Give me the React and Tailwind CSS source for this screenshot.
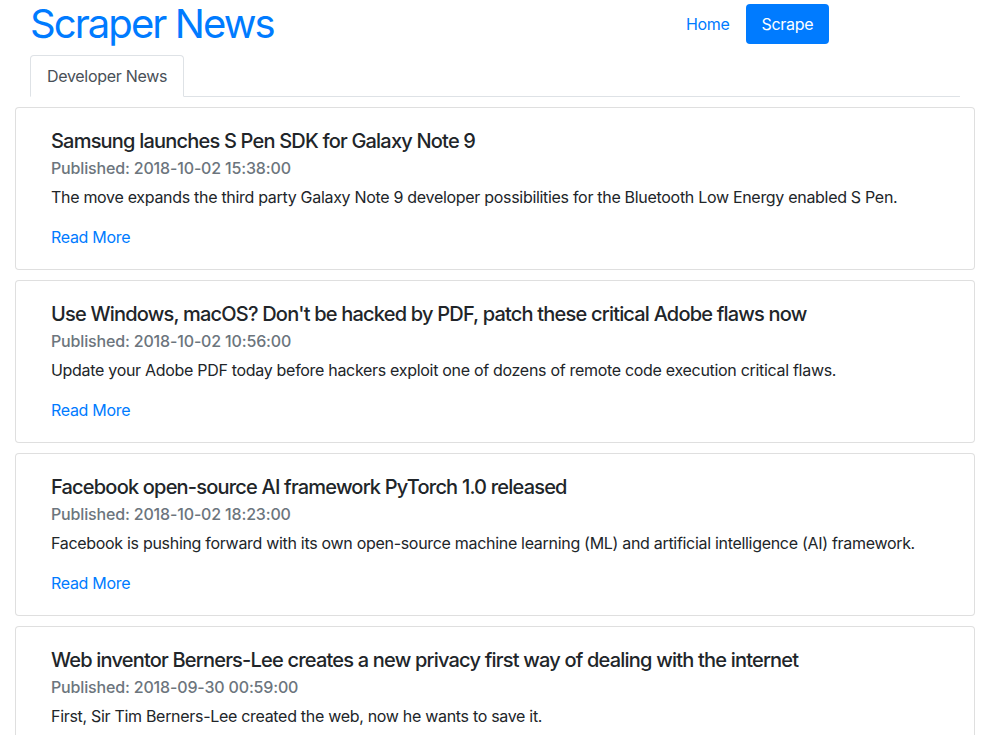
const articles = [
  {
    title: "Samsung launches S Pen SDK for Galaxy Note 9",
    published: "2018-10-02 15:38:00",
    summary:
      "The move expands the third party Galaxy Note 9 developer possibilities for the Bluetooth Low Energy enabled S Pen.",
  },
  {
    title: "Use Windows, macOS? Don't be hacked by PDF, patch these critical Adobe flaws now",
    published: "2018-10-02 10:56:00",
    summary:
      "Update your Adobe PDF today before hackers exploit one of dozens of remote code execution critical flaws.",
  },
  {
    title: "Facebook open-source AI framework PyTorch 1.0 released",
    published: "2018-10-02 18:23:00",
    summary:
      "Facebook is pushing forward with its own open-source machine learning (ML) and artificial intelligence (AI) framework.",
  },
  {
    title: "Web inventor Berners-Lee creates a new privacy first way of dealing with the internet",
    published: "2018-09-30 00:59:00",
    summary: "First, Sir Tim Berners-Lee created the web, now he wants to save it.",
  },
];

function ArticleCard({ article }) {
  return (
    <div className="mb-[10px] rounded border border-[rgba(0,0,0,0.125)] bg-white px-[35px] pt-[21px] pb-5">
      <h5 className="text-[20px] leading-[24px] font-medium tracking-[-0.04em] text-[#212529]">
        {article.title}
      </h5>
      <h6 className="mt-[6px] text-base leading-[19px] font-medium tracking-[-0.01em] text-[#6c757d]">
        Published: {article.published}
      </h6>
      <p className="mt-[7px] text-base leading-6 tracking-[-0.019em] text-[#212529]">{article.summary}</p>
      <a href="#" className="mt-4 block text-base leading-6 tracking-[-0.019em] text-[#007bff]">
        Read More
      </a>
    </div>
  );
}

export default function App() {
  return (
    <div className="min-h-screen bg-white font-['Inter',sans-serif] text-[#212529]">
      <div className="mx-[15px]">
        <div className="flex px-[15px]">
          <div className="w-[625px]">
            <h1 className="text-[40px] leading-[48px] font-normal tracking-[-0.048em] text-[#007bff]">
              Scraper News
            </h1>
          </div>
          <nav className="ml-[15px] flex items-start pt-1 tracking-[-0.02em]">
            <a href="#" className="px-4 py-2 text-base leading-6 text-[#007bff]">
              Home
            </a>
            <a href="#" className="rounded bg-[#007bff] px-4 py-2 text-base leading-6 text-white">
              Scrape
            </a>
          </nav>
        </div>
        <div className="mx-[15px] mt-[7px] flex border-b border-[#dee2e6]">
          <div className="-mb-px rounded-t border border-[#dee2e6] border-b-white bg-white px-4 py-2 text-base leading-6 tracking-[-0.019em] text-[#495057]">
            Developer News
          </div>
        </div>
        <div className="mt-[10px]">
          {articles.map((a) => (
            <ArticleCard key={a.published} article={a} />
          ))}
        </div>
      </div>
    </div>
  );
}
